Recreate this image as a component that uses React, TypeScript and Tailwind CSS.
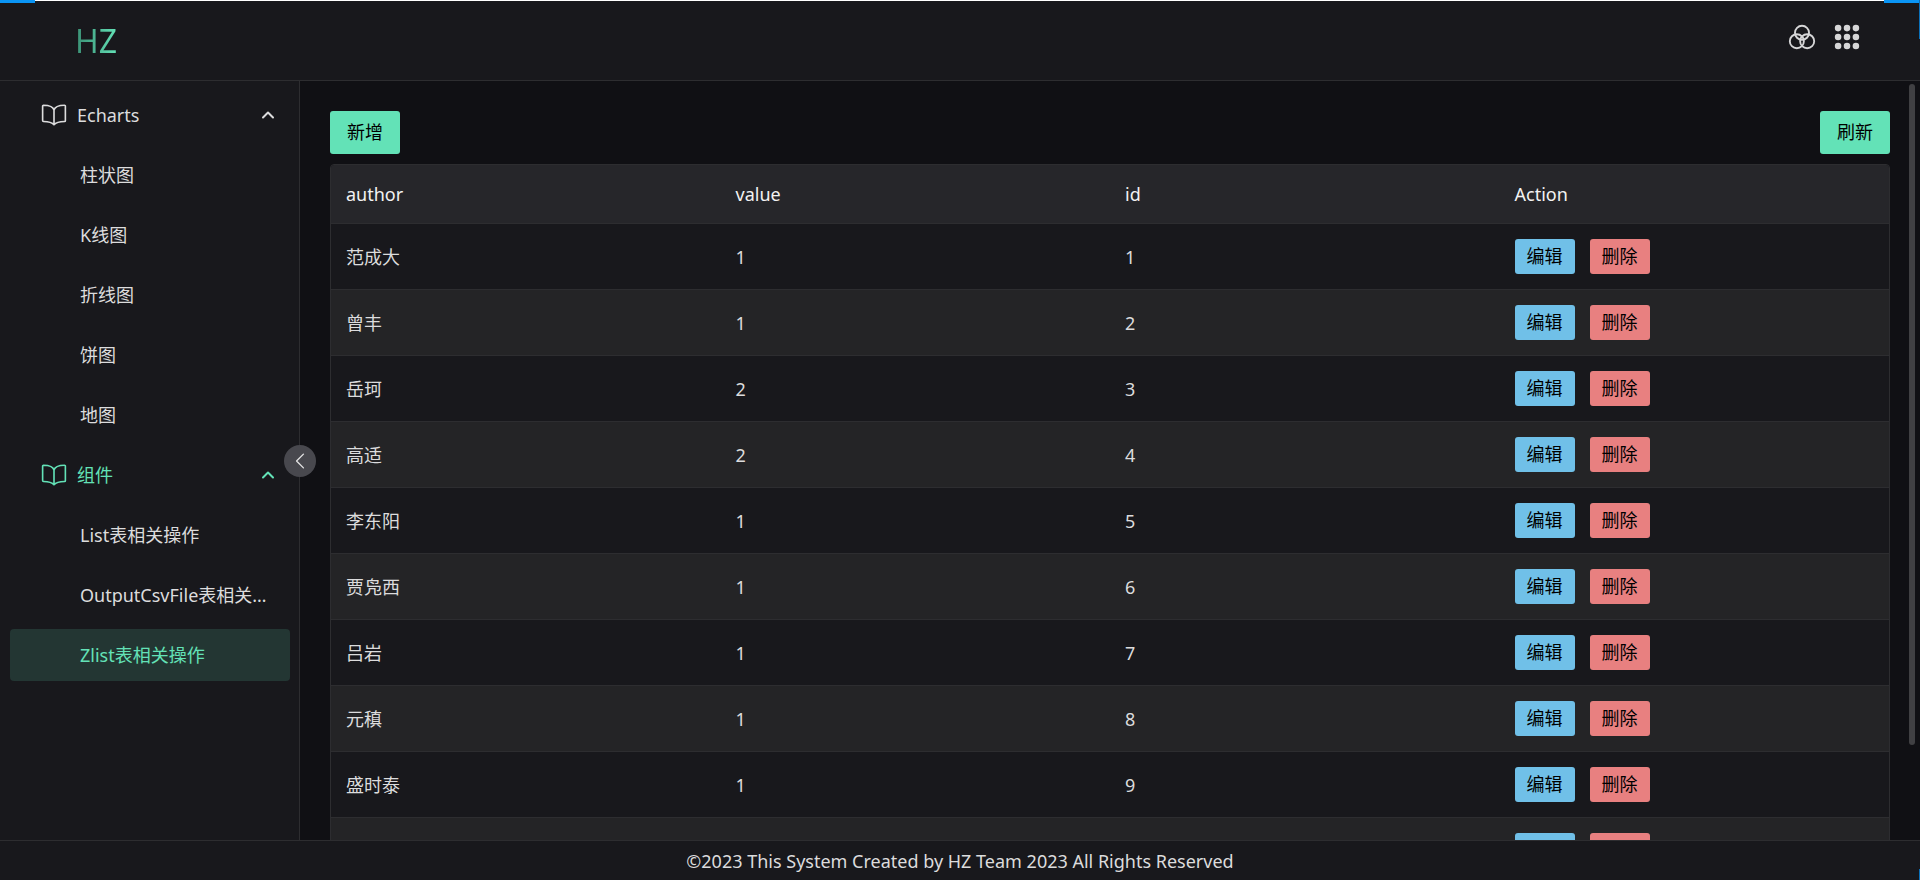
import { IoApps, IoBookOutline, IoColorFilterOutline } from "react-icons/io5";

interface MenuGroup {
  label: string;
  active?: boolean;
  items: { label: string; active?: boolean }[];
}

interface Row {
  key: number;
  author?: string;
  value?: number;
  id?: number;
}

const MENU: MenuGroup[] = [
  {
    label: "Echarts",
    items: [
      { label: "柱状图" },
      { label: "K线图" },
      { label: "折线图" },
      { label: "饼图" },
      { label: "地图" },
    ],
  },
  {
    label: "组件",
    active: true,
    items: [
      { label: "List表相关操作" },
      { label: "OutputCsvFile表相关操作" },
      { label: "Zlist表相关操作", active: true },
    ],
  },
];

const ROWS: Row[] = [
  { key: 1, author: "范成大", value: 1, id: 1 },
  { key: 2, author: "曾丰", value: 1, id: 2 },
  { key: 3, author: "岳珂", value: 2, id: 3 },
  { key: 4, author: "高适", value: 2, id: 4 },
  { key: 5, author: "李东阳", value: 1, id: 5 },
  { key: 6, author: "贾凫西", value: 1, id: 6 },
  { key: 7, author: "吕岩", value: 1, id: 7 },
  { key: 8, author: "元稹", value: 1, id: 8 },
  { key: 9, author: "盛时泰", value: 1, id: 9 },
  { key: 10 },
];

const COLUMNS = ["author", "value", "id", "Action"];

function Chevron({ className }: { className: string }) {
  return (
    <svg viewBox="0 0 16 16" fill="none" stroke="currentColor" strokeLinecap="round" strokeLinejoin="round" className={className}>
      <path d="M3 10.5 8 5.5l5 5" />
    </svg>
  );
}

function Header() {
  return (
    <header className="relative flex h-[81px] shrink-0 items-center justify-between border-t border-b border-t-white border-b-[#2d2d30] bg-[#18181c] pr-[58px] pl-[75px]">
      {/* 顶部加载条残留的两端 */}
      <span className="absolute -top-px left-0 h-[3px] w-[35px] bg-[#0a95f5]" />
      <span className="absolute -top-px right-0 h-[3px] w-9 bg-[#0a95f5]" />
      <span className="absolute -top-px right-0 h-[39px] w-px bg-[#0a6fb8]" />
      <h1 className="bg-linear-to-r from-[#3a8f74] to-[#63e2b7] bg-clip-text text-[32px] leading-10 font-normal text-transparent">
        HZ
      </h1>
      <div className="mb-2 flex gap-[15px] text-[#d6d6d7]">
        <button type="button" aria-label="主题">
          <IoColorFilterOutline size={30} />
        </button>
        <button type="button" aria-label="应用">
          <IoApps size={30} />
        </button>
      </div>
    </header>
  );
}

function Sider() {
  return (
    <aside className="relative w-[300px] shrink-0 border-r border-[#2d2d30] bg-[#18181c]">
      <nav className="flex flex-col gap-2 pt-2 pr-[9px] pl-2.5">
        {MENU.map((group) => (
          <div key={group.label} className="flex flex-col gap-2">
            <button
              type="button"
              aria-expanded="true"
              className={`flex h-[52px] items-center gap-2.5 pr-3.5 pl-[31px] ${group.active ? "text-[#63e2b7]" : "text-[#dcdcdd]"}`}
            >
              <IoBookOutline size={26} />
              <span className="grow text-left">{group.label}</span>
              <Chevron className="size-4 stroke-2" />
            </button>
            {group.items.map((item) => (
              <a
                key={item.label}
                href="#"
                className={`flex h-[52px] items-center rounded pr-3 pl-[70px] ${item.active ? "bg-[#233633] text-[#63e2b7]" : "text-[#dcdcdd]"}`}
              >
                <span className="truncate">{item.label}</span>
              </a>
            ))}
          </div>
        ))}
      </nav>
      <button
        type="button"
        aria-label="收起菜单"
        className="absolute top-1/2 -right-[17px] z-10 flex size-8 -translate-y-1/2 items-center justify-center rounded-full bg-[#48484e] text-[#e2e2e3]"
      >
        <Chevron className="size-[22px] -rotate-90 stroke-1" />
      </button>
    </aside>
  );
}

function DataTable() {
  return (
    <div className="overflow-hidden rounded border border-[#2d2d30]">
      <table className="w-full table-fixed border-separate border-spacing-0 text-left">
        <thead>
          <tr className="h-[59px] bg-[#26262a] text-[#f2f2f2]">
            {COLUMNS.map((col) => (
              <th key={col} className="border-b border-[#2d2d30] px-[15px] font-normal">
                {col}
              </th>
            ))}
          </tr>
        </thead>
        <tbody>
          {ROWS.map((row) => (
            <tr key={row.key} className="h-[66px] bg-[#18181c] even:bg-[#242426]">
              <td className="border-b border-[#2d2d30] px-[15px]">{row.author}</td>
              <td className="border-b border-[#2d2d30] px-[15px]">{row.value}</td>
              <td className="border-b border-[#2d2d30] px-[15px]">{row.id}</td>
              <td className="border-b border-[#2d2d30] px-[15px]">
                <div className="flex gap-[15px]">
                  <button type="button" className="h-[35px] w-[60px] rounded-[3px] bg-[#70c0e8] pb-0.5 text-black">
                    编辑
                  </button>
                  <button type="button" className="h-[35px] w-[60px] rounded-[3px] bg-[#e88080] pb-0.5 text-black">
                    删除
                  </button>
                </div>
              </td>
            </tr>
          ))}
        </tbody>
      </table>
    </div>
  );
}

export default function App() {
  return (
    <div className="flex h-screen flex-col overflow-hidden bg-[#101014] font-['Noto_Sans','Noto_Sans_CJK_SC',sans-serif] text-lg leading-7 text-[#dcdcdd]">
      <Header />
      <div className="flex min-h-0 grow">
        <Sider />
        <main className="relative min-w-0 grow overflow-hidden px-[30px] pt-[30px]">
          <div className="mb-2.5 flex justify-between">
            <button type="button" className="h-[43px] w-[70px] rounded-[3px] bg-[#63e2b7] pb-0.5 text-black">
              新增
            </button>
            <button type="button" className="h-[43px] w-[70px] rounded-[3px] bg-[#63e2b7] pb-0.5 text-black">
              刷新
            </button>
          </div>
          <DataTable />
          <span className="absolute top-[3px] right-[5px] bottom-[95px] w-1.5 rounded-full bg-[#404043]" />
        </main>
      </div>
      <footer className="relative flex h-10 shrink-0 items-center justify-center border-t border-[#2d2d30] bg-[#18181c]">
        ©2023 This System Created by HZ Team 2023 All Rights Reserved
        <span className="absolute right-0 bottom-0 h-[11px] w-px bg-[#0a6fb8]" />
      </footer>
    </div>
  );
}
